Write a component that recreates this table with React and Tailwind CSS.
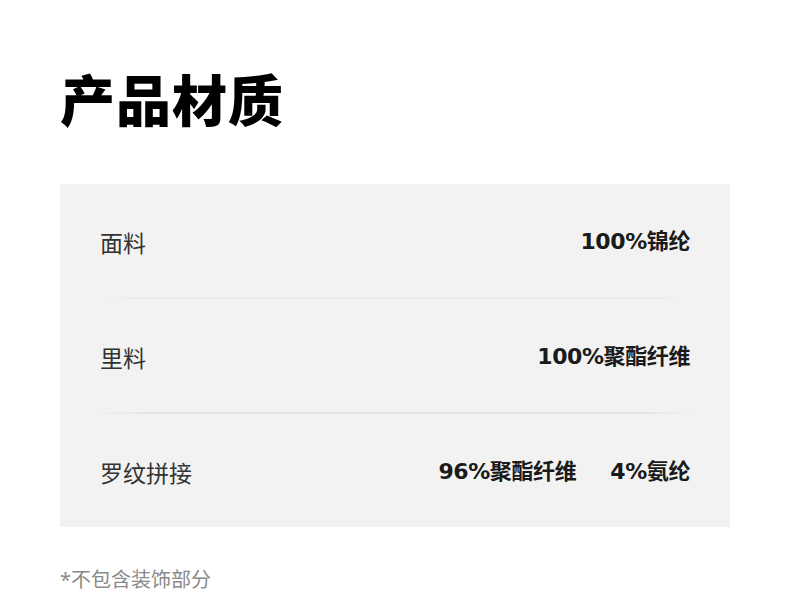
import React from "react";

const rows = [
  { label: "面料", values: ["100%锦纶"] },
  { label: "里料", values: ["100%聚酯纤维"] },
  { label: "罗纹拼接", values: ["96%聚酯纤维", "4%氨纶"] },
];

const App = () => {
  return (
    <div
      className="w-[790px] h-[606px] bg-white overflow-hidden"
      style={{ fontFamily: '"Noto Sans", "Noto Sans CJK SC", sans-serif' }}
    >
      <div className="pt-[64px] pl-[60px]">
        <h1 className="text-[55px] leading-[72px] font-black text-black tracking-[1px]">
          产品材质
        </h1>
      </div>

      {/* material table */}
      <div className="mt-[48px] mx-[60px] bg-[#f2f2f2]">
        {rows.map((row, index) => (
          <div key={index}>
            <div className="h-[113px] flex items-center justify-between px-[40px]">
              <span className="text-[23px] text-[#333333] pt-[6px]">{row.label}</span>
              <div className="flex items-center gap-[34px] pt-[2px]">
                {row.values.map((v, i) => (
                  <span
                    key={i}
                    className="text-[22px] font-semibold text-[#1a1a1a] font-['DejaVu_Sans','Noto_Sans_CJK_SC',sans-serif] tracking-[-0.4px]"
                  >
                    {v}
                  </span>
                ))}
              </div>
            </div>
            {index < rows.length - 1 && (
              <div
                className={`h-[2px] bg-[linear-gradient(to_right,transparent,#e4e4e4_10%,#e4e4e4_90%,transparent)] ${
                  index === 0 ? "mx-[36px] opacity-60" : "mx-[32px]"
                }`}
              ></div>
            )}
          </div>
        ))}
      </div>

      <p className="mt-[38px] pl-[60px] text-[20px] text-[#8a8a8a]">*不包含装饰部分</p>
    </div>
  );
};

export default App;
